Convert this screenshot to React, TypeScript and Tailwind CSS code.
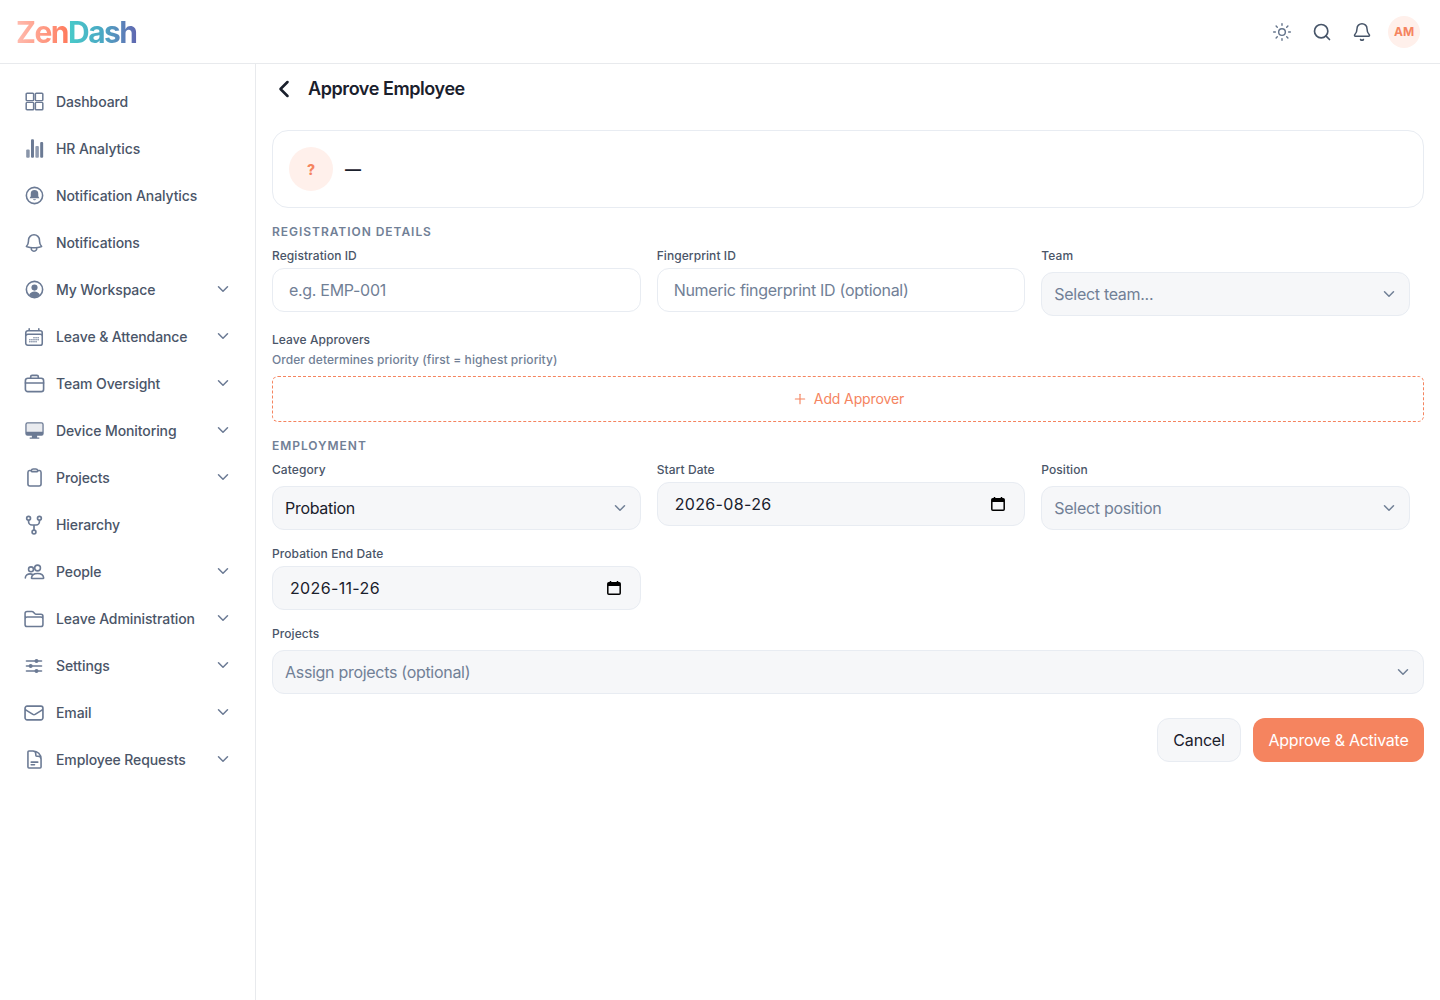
import React from "react";
import { ChevronDown, ChevronLeft, Plus, Search, Sun, Bell } from "lucide-react";
import {
  HiOutlineBell,
  HiOutlineCalendarDays,
  HiOutlineClipboard,
  HiOutlineDocumentText,
  HiOutlineEnvelope,
  HiOutlineFolder,
} from "react-icons/hi2";

const I = ({ children, w = 1.7, small }: { children: React.ReactNode; w?: number; small?: boolean }) => (
  <svg viewBox="0 0 24 24" fill="none" stroke="currentColor" strokeWidth={w} strokeLinecap="round" strokeLinejoin="round" className={small ? "h-5 w-5" : "h-[21px] w-[21px]"}>
    {children}
  </svg>
);

const Grid = () => (
  <I>
    <rect x="2.500" y="2.500" width="8.500" height="8.500" rx="1" />
    <rect x="13" y="2.500" width="8.500" height="8.500" rx="1" />
    <rect x="2.500" y="13" width="8.500" height="8.500" rx="1" />
    <rect x="13" y="13" width="8.500" height="8.500" rx="1" />
  </I>
);
const Bars = () => (
  <svg viewBox="0 0 24 24" className="h-[21px] w-[21px]" fill="currentColor">
    <rect x="2.500" y="13" width="4" height="9.500" rx="1.200" opacity=".8" />
    <rect x="8" y="1.500" width="3.400" height="21" rx="1.200" />
    <rect x="13" y="9" width="4" height="13.500" rx="1.200" opacity=".75" />
    <rect x="18.500" y="4.500" width="3.400" height="18" rx="1.200" />
  </svg>
);
const BellCircle = () => (
  <I w={1.8}>
    <circle cx="12" cy="12" r="9.300" />
    <path fill="currentColor" stroke="none" d="M12 5.800a4.300 4.300 0 0 0-4.300 4.300v2.800l-1.300 2.300h11.200l-1.300-2.300v-2.800A4.300 4.300 0 0 0 12 5.800ZM10.200 16.200a1.900 1.900 0 0 0 3.600 0Z" />
  </I>
);
const UserCircle = () => (
  <I w={1.8}>
    <circle cx="12" cy="12" r="9.300" />
    <circle cx="12" cy="9.800" r="3.500" fill="currentColor" stroke="none" />
    <path fill="currentColor" stroke="none" d="M5.800 18.400c1-2.600 3.400-4 6.200-4s5.200 1.400 6.200 4A9 9 0 0 1 12 21a9 9 0 0 1-6.200-2.600Z" />
  </I>
);
const Brief = () => (
  <svg viewBox="0 0 24 24" fill="none" stroke="currentColor" strokeWidth={1.7} strokeLinecap="round" strokeLinejoin="round" className="h-[23px] w-[23px]">
    <rect x="2.500" y="6.500" width="19" height="14" rx="2.500" />
    <path d="M8 6.500V5a1.500 1.500 0 0 1 1.500-1.500h5A1.500 1.500 0 0 1 16 5v1.500" />
    <path d="M2.500 11.500h19" />
  </svg>
);
const Monitor = () => (
  <svg viewBox="0 0 24 24" className="h-[21px] w-[21px]" fill="currentColor">
    <path fillRule="evenodd" d="M4 2.500h16A2.500 2.500 0 0 1 22.500 5v10.500A2.500 2.500 0 0 1 20 18h-5v2h2.500v1.500h-11V20H9v-2H4a2.500 2.500 0 0 1-2.500-2.500V5A2.500 2.500 0 0 1 4 2.500Zm0 1.500a1 1 0 0 0-1 1v8.500h18V5a1 1 0 0 0-1-1H4Z" />
    <rect x="3" y="4" width="18" height="10" opacity=".15" />
  </svg>
);
const Fork = () => (
  <I w={2} small>
    <circle cx="5.500" cy="4" r="2.300" />
    <circle cx="18.500" cy="4" r="2.300" />
    <circle cx="12" cy="20.500" r="2.300" />
    <path d="M5.500 6.300v1.700a4 4 0 0 0 4 4h5a4 4 0 0 0 4-4V6.300M12 12v6.200" />
  </I>
);
const People = () => (
  <svg viewBox="0 0 24 24" fill="none" stroke="currentColor" strokeWidth={1.8} strokeLinecap="round" strokeLinejoin="round" className="h-[21px] w-[21px]">
    <circle cx="8" cy="9.500" r="2.800" />
    <circle cx="15.500" cy="8" r="3.300" />
    <path d="M1.500 19.500c0-3 2.800-4.800 5.500-4.800 1 0 2 .2 2.800.7" />
    <path d="M8.500 19.500c.3-3.400 3.300-5.200 7-5.200s6.800 1.800 7 5.200c-.1.300-.3.500-.6.500H9.100c-.3 0-.5-.2-.6-.5Z" />
  </svg>
);
const Sliders = () => (
  <I w={2} small>
    <path d="M3 6h18M3 12h18M3 18h18" />
    <circle cx="15" cy="6" r="1.400" fill="currentColor" />
    <circle cx="8" cy="12" r="1.400" fill="currentColor" />
    <circle cx="15" cy="18" r="1.400" fill="currentColor" />
  </I>
);

const nav: { label: string; icon: React.ReactNode; sub?: boolean }[] = [
  { label: "Dashboard", icon: <Grid /> },
  { label: "HR Analytics", icon: <Bars /> },
  { label: "Notification Analytics", icon: <BellCircle /> },
  { label: "Notifications", icon: <HiOutlineBell className="h-[22px] w-[22px]" strokeWidth={1.7} /> },
  { label: "My Workspace", icon: <UserCircle />, sub: true },
  { label: "Leave & Attendance", icon: <HiOutlineCalendarDays className="h-[22px] w-[22px]" strokeWidth={1.7} />, sub: true },
  { label: "Team Oversight", icon: <Brief />, sub: true },
  { label: "Device Monitoring", icon: <Monitor />, sub: true },
  { label: "Projects", icon: <HiOutlineClipboard className="h-[21px] w-[21px]" strokeWidth={1.8} />, sub: true },
  { label: "Hierarchy", icon: <Fork /> },
  { label: "People", icon: <People />, sub: true },
  { label: "Leave Administration", icon: <HiOutlineFolder className="h-[22px] w-[22px]" strokeWidth={1.7} />, sub: true },
  { label: "Settings", icon: <Sliders />, sub: true },
  { label: "Email", icon: <HiOutlineEnvelope className="h-[22px] w-[22px]" strokeWidth={1.8} />, sub: true },
  { label: "Employee Requests", icon: <HiOutlineDocumentText className="h-[21px] w-[21px]" strokeWidth={1.8} />, sub: true },
];

const Label = ({ children }: { children: React.ReactNode }) => (
  <div className="h-4 pt-px text-xs leading-4 font-medium tracking-[0.07px] text-[#4a5568]">{children}</div>
);
const Section = ({ children }: { children: React.ReactNode }) => (
  <div className="h-4 pt-px text-xs leading-4 font-semibold tracking-[0.96px] uppercase text-[#718096]">{children}</div>
);

const TextField = ({ label, placeholder }: { label: string; placeholder: string }) => (
  <div>
    <Label>{label}</Label>
    <input
      placeholder={placeholder}
      className="mt-[5px] block h-11 w-full rounded-xl border border-[#e8ecf2] bg-white px-4 text-base tracking-[-0.3px] text-[#1a202c] outline-none placeholder:text-[#718096]"
    />
  </div>
);

const SelectField = ({ label, value, muted }: { label: string; value: string; muted?: boolean }) => (
  <div>
    <Label>{label}</Label>
    <div className="mt-[9px] flex h-11 items-center justify-between rounded-xl border border-[#e8ecf2] bg-[#f6f7f9] pr-[11px] pl-3">
      <span className={muted ? "text-base tracking-[-0.3px] text-[#718096]" : "text-base tracking-[-0.3px] text-[#1a202c]"}>{value}</span>
      <ChevronDown className="h-[18px] w-[18px] text-[#718096]" strokeWidth={2} />
    </div>
  </div>
);

const Cal = () => (
  <svg viewBox="0 0 16 16" className="h-4 w-4 text-black" fill="none">
    <rect x="1.800" y="2.800" width="12.400" height="11.400" rx="1" stroke="currentColor" strokeWidth="1.500" />
    <path d="M2 3h12v3H2z" fill="currentColor" />
    <path d="M4.500 1v2M11.500 1v2" stroke="currentColor" strokeWidth="1.500" />
  </svg>
);

const DateField = ({ label, value }: { label: string; value: string }) => (
  <div>
    <Label>{label}</Label>
    <div className="mt-[5px] flex h-11 items-center justify-between rounded-xl border border-[#e8ecf2] bg-[#f6f7f9] pr-[18px] pl-[17px]">
      <span className="text-base tracking-[0.35px] text-[#1a202c]">{value}</span>
      <Cal />
    </div>
  </div>
);

export default function App() {
  return (
    <div className="flex min-h-[1000px] flex-col bg-white font-['Inter',sans-serif]">
      <header className="flex h-16 shrink-0 items-center justify-between border-b border-[#e8eaed] pr-5 pl-4">
        <div className="text-[30px] leading-none font-bold tracking-[-1.500px]">
          <span className="bg-gradient-to-r from-[#ffbcb0] to-[#ff7a5c] bg-clip-text text-transparent">Zen</span>
          <span className="bg-gradient-to-r from-[#48cbc9] via-[#4aa8c4] to-[#5f66b0] bg-clip-text text-transparent">Dash</span>
        </div>
        <div className="flex items-center">
          <Sun className="mr-5 h-5 w-5 text-[#64748b]" strokeWidth={1.7} />
          <Search className="mr-5 h-5 w-5 text-[#475569]" strokeWidth={2} />
          <Bell className="mr-4 h-5 w-5 text-[#475569]" strokeWidth={1.8} />
          <div className="flex h-8 w-8 items-center justify-center rounded-full bg-[#fff0eb] text-xs font-bold text-[#f5845f]">AM</div>
        </div>
      </header>
      <div className="flex flex-1">
        <aside className="w-64 shrink-0 border-r border-[#e8eaed] pt-[18px] pr-[23px] pl-6">
          <nav className="flex flex-col gap-2">
            {nav.map((n) => (
              <div key={n.label} className="flex h-[39px] items-center text-sm font-medium tracking-[-0.1px] text-[#4a5568]">
                <span className="flex h-6 w-5 shrink-0 items-center justify-center text-[#6b7a94] [&>svg]:shrink-0">{n.icon}</span>
                <span className="ml-3 flex-1">{n.label}</span>
                {n.sub && <ChevronDown className="relative -top-px h-[18px] w-[18px] text-[#6b7a94]" strokeWidth={2} />}
              </div>
            ))}
          </nav>
        </aside>
        <main className="flex-1 px-4">
          <div className="flex h-[50px] items-center">
            <ChevronLeft className="ml-[-2px] h-7 w-7 text-[#1a202c]" strokeWidth={2.200} />
            <h1 className="ml-[10px] text-lg font-semibold tracking-[-0.42px] text-[#1a202c]">Approve Employee</h1>
          </div>
          <div className="mt-4 flex h-[78px] items-center rounded-2xl border border-[#e8ecf2] pl-4">
            <div className="flex h-11 w-11 items-center justify-center rounded-full bg-[#fff0eb] pt-px text-sm font-extrabold text-[#f5845f]">?</div>
            <div className="ml-3 text-base font-bold text-[#1a202c]">—</div>
          </div>

          <div className="mt-[15px]">
            <Section>Registration Details</Section>
          </div>
          <div className="mt-2 grid grid-cols-3 gap-4 pr-[14px]">
            <TextField label="Registration ID" placeholder="e.g. EMP-001" />
            <TextField label="Fingerprint ID" placeholder="Numeric fingerprint ID (optional)" />
            <SelectField label="Team" value="Select team..." muted />
          </div>

          <div className="mt-[15px]">
            <Label>Leave Approvers</Label>
          </div>
          <div className="mt-1 h-4 pt-px text-xs leading-4 font-medium tracking-[0.07px] text-[#718096]">Order determines priority (first = highest priority)</div>
          <div className="mt-[9px] flex h-[46px] items-center justify-center gap-[6px] rounded-md border border-dashed border-[#f5845f] text-sm font-normal tracking-[-0.12px] text-[#f5845f]">
            <Plus className="h-4 w-4" strokeWidth={1.700} />
            <span>Add Approver</span>
          </div>

          <div className="mt-[15px]">
            <Section>Employment</Section>
          </div>
          <div className="mt-2 grid grid-cols-3 gap-4 pr-[14px]">
            <SelectField label="Category" value="Probation" />
            <DateField label="Start Date" value="2026-08-26" />
            <SelectField label="Position" value="Select position" muted />
          </div>

          <div className="mt-[15px] grid grid-cols-3 gap-4 pr-[14px]">
            <DateField label="Probation End Date" value="2026-11-26" />
          </div>

          <div className="mt-[15px]">
            <SelectField label="Projects" value="Assign projects (optional)" muted />
          </div>

          <div className="mt-6 flex justify-end gap-3">
            <button className="h-11 w-[84px] rounded-xl border border-[#e8ecf2] bg-[#f6f7f9] text-base font-normal tracking-[-0.2px] text-[#1a202c]">Cancel</button>
            <button className="h-11 w-[171px] rounded-xl bg-[#f5845f] text-base font-normal tracking-[-0.26px] text-white">Approve &amp; Activate</button>
          </div>
        </main>
      </div>
    </div>
  );
}
